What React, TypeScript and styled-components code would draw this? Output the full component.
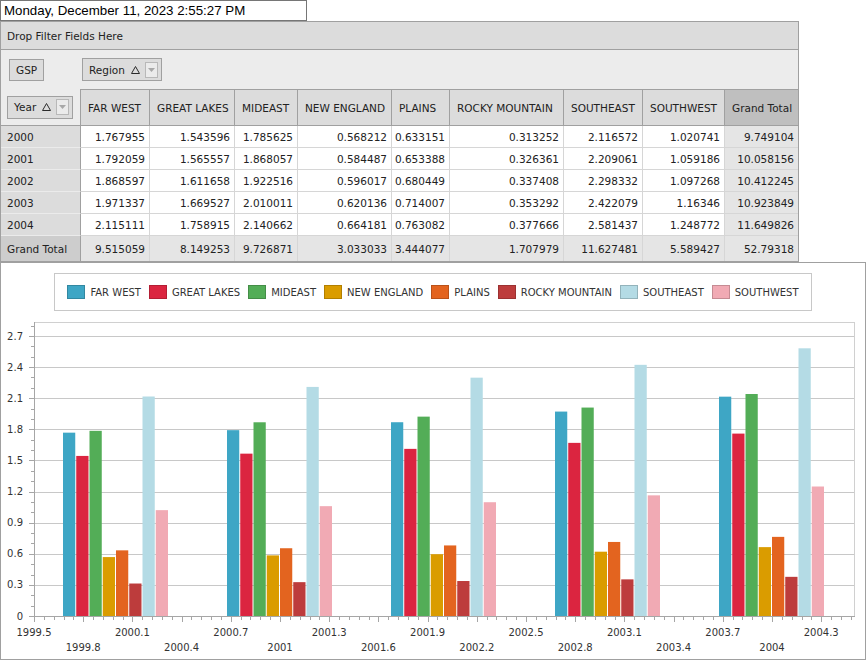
import React from 'react';
import styled, { createGlobalStyle } from 'styled-components';

const GlobalStyle = createGlobalStyle`
  html, body {
    margin: 0;
    padding: 0;
    background: #fff;
  }
  body {
    font-family: "DejaVu Sans", "Liberation Sans", sans-serif;
    color: #222;
  }
`;

type Region = { name: string; color: string; values: number[] };

const regions: Region[] = [
  { name: 'FAR WEST', color: '#3ea6c5', values: [1.767955, 1.792059, 1.868597, 1.971337, 2.115111] },
  { name: 'GREAT LAKES', color: '#db2540', values: [1.543596, 1.565557, 1.611658, 1.669527, 1.758915] },
  { name: 'MIDEAST', color: '#53ad57', values: [1.785625, 1.868057, 1.922516, 2.010011, 2.140662] },
  { name: 'NEW ENGLAND', color: '#da9c00', values: [0.568212, 0.584487, 0.596017, 0.620136, 0.664181] },
  { name: 'PLAINS', color: '#e3641f', values: [0.633151, 0.653388, 0.680449, 0.714007, 0.763082] },
  { name: 'ROCKY MOUNTAIN', color: '#bd3c3c', values: [0.313252, 0.326361, 0.337408, 0.353292, 0.377666] },
  { name: 'SOUTHEAST', color: '#b4dbe5', values: [2.116572, 2.209061, 2.298332, 2.422079, 2.581437] },
  { name: 'SOUTHWEST', color: '#f1aab4', values: [1.020741, 1.059186, 1.097268, 1.16346, 1.248772] },
];

const years = [2000, 2001, 2002, 2003, 2004];
const yearTotals = ['9.749104', '10.058156', '10.412245', '10.923849', '11.649826'];
const regionTotals = ['9.515059', '8.149253', '9.726871', '3.033033', '3.444077', '1.707979', '11.627481', '5.589427'];
const grandTotal = '52.79318';

/* ---------- page ---------- */

const Page = styled.div`
  width: 866px;
`;

const DateBox = styled.div`
  box-sizing: border-box;
  width: 307px;
  height: 21px;
  padding: 0 3px;
  border: 1px solid #767676;
  font-family: "Liberation Sans", Arial, sans-serif;
  font-size: 13.3px;
  line-height: 19px;
  color: #000;
  white-space: nowrap;
`;

/* ---------- pivot grid ---------- */

const Pivot = styled.div`
  box-sizing: border-box;
  width: 799px;
  border: 1px solid #a0a0a0;
  font-size: 10.5px;
`;

const FilterArea = styled.div`
  box-sizing: border-box;
  height: 28px;
  display: flex;
  align-items: center;
  padding-left: 6px;
  background: #dcdcdc;
  border-bottom: 1px solid #a0a0a0;
`;

const FieldArea = styled.div`
  height: 39px;
  display: flex;
  align-items: center;
  background: #ececec;
`;

const DataFieldZone = styled.div`
  box-sizing: border-box;
  width: 81px;
  padding-left: 8px;
  display: flex;
`;

const FieldButton = styled.div<{ $menu?: boolean }>`
  box-sizing: border-box;
  display: inline-flex;
  align-items: center;
  height: ${({ $menu }) => ($menu ? '23px' : '22px')};
  padding: ${({ $menu }) => ($menu ? '0 3px 0 6px' : '0 6px')};
  gap: 5px;
  background: #dcdcdc;
  border: 1px solid #a0a0a0;
  white-space: nowrap;
`;

const FieldName = styled.span`
  margin-right: 1px;
`;

const DropBox = styled.span`
  box-sizing: border-box;
  width: 13px;
  height: 16px;
  display: flex;
  align-items: center;
  justify-content: center;
  background: #ebebeb;
  border: 1px solid #b8b8b8;
`;

const SortArrow = () => (
  <svg width="9" height="8" viewBox="0 0 9 8">
    <polygon points="0.5,7.5 4.5,0.5 8.5,7.5" fill="none" stroke="#2a2a2a" strokeWidth="1" />
  </svg>
);

const DropArrow = () => (
  <svg width="7" height="4" viewBox="0 0 7 4">
    <polygon points="0,0 7,0 3.5,4" fill="#a8a8a8" />
  </svg>
);

const MenuField = ({ name }: { name: string }) => (
  <FieldButton $menu>
    <FieldName>{name}</FieldName>
    <SortArrow />
    <DropBox>
      <DropArrow />
    </DropBox>
  </FieldButton>
);

const PivotGrid = styled.div`
  display: grid;
  grid-template-columns: 80px 69px 85px 63px 94px 58px 114px 79px 82px 73px;
  grid-template-rows: 37px repeat(5, 22px) 25px;
`;

const Cell = styled.div`
  box-sizing: border-box;
  display: flex;
  align-items: center;
  white-space: nowrap;
  overflow: hidden;
`;

const CornerCell = styled(Cell)`
  padding-left: 6px;
  background: #ececec;
  border-right: 1px solid #a0a0a0;
  border-bottom: 1px solid #a0a0a0;
`;

const ColHeader = styled(Cell)<{ $total?: boolean }>`
  padding-left: 7px;
  background: ${({ $total }) => ($total ? '#bfbfbf' : '#dcdcdc')};
  border-top: 1px solid #a0a0a0;
  border-bottom: 1px solid #a0a0a0;
  border-right: ${({ $total }) => ($total ? 'none' : '1px solid #a0a0a0')};
`;

const RowHeader = styled(Cell)<{ $total?: boolean }>`
  padding-left: 6px;
  background: ${({ $total }) => ($total ? '#cdcdcd' : '#dcdcdc')};
  border-right: 1px solid #a0a0a0;
  border-bottom: ${({ $total }) => ($total ? 'none' : '1px solid #ebebeb')};
`;

const ValueCell = styled(Cell)<{ $total?: boolean; $lastCol?: boolean; $lastRow?: boolean }>`
  justify-content: flex-end;
  padding-right: 4px;
  background: ${({ $total }) => ($total ? '#e5e5e5' : '#fff')};
  border-right: ${({ $lastCol }) => ($lastCol ? 'none' : '1px solid #d6d6d6')};
  border-bottom: ${({ $lastRow }) => ($lastRow ? 'none' : '1px solid #d6d6d6')};
`;

const PivotTable = () => (
  <Pivot>
    <FilterArea>Drop Filter Fields Here</FilterArea>
    <FieldArea>
      <DataFieldZone>
        <FieldButton>GSP</FieldButton>
      </DataFieldZone>
      <MenuField name="Region" />
    </FieldArea>
    <PivotGrid>
      <CornerCell>
        <MenuField name="Year" />
      </CornerCell>
      {regions.map((r) => (
        <ColHeader key={r.name}>{r.name}</ColHeader>
      ))}
      <ColHeader $total>Grand Total</ColHeader>

      {years.map((year, j) => (
        <React.Fragment key={year}>
          <RowHeader>{year}</RowHeader>
          {regions.map((r) => (
            <ValueCell key={r.name}>{String(r.values[j])}</ValueCell>
          ))}
          <ValueCell $total $lastCol>
            {yearTotals[j]}
          </ValueCell>
        </React.Fragment>
      ))}

      <RowHeader $total>Grand Total</RowHeader>
      {regionTotals.map((t, i) => (
        <ValueCell key={i} $total $lastRow>
          {t}
        </ValueCell>
      ))}
      <ValueCell $total $lastRow $lastCol>
        {grandTotal}
      </ValueCell>
    </PivotGrid>
  </Pivot>
);

/* ---------- chart ---------- */

const ChartPanel = styled.div`
  box-sizing: border-box;
  width: 866px;
  height: 398px;
  display: flex;
  flex-direction: column;
  align-items: center;
  border: 1px solid #a0a0a0;
`;

const Legend = styled.div`
  box-sizing: border-box;
  margin-top: 10px;
  height: 38px;
  display: flex;
  align-items: center;
  gap: 8px;
  padding: 0 12px;
  border: 1px solid #c8c8c8;
  font-size: 10px;
  color: #333;
`;

const LegendItem = styled.div`
  display: flex;
  align-items: center;
  gap: 5px;
  white-space: nowrap;
`;

const Swatch = styled.span<{ $color: string }>`
  box-sizing: border-box;
  width: 18px;
  height: 14px;
  background: ${({ $color }) => $color};
  border: 1px solid rgba(0, 0, 0, 0.18);
`;

const Plot = styled.svg`
  display: block;
  flex: none;
  text {
    font-family: "DejaVu Sans", sans-serif;
    font-size: 10px;
    fill: #333;
  }
`;

const X0 = 34;
const X_SCALE = 164;
const Y0 = 616;
const Y_SCALE = 103.7;
const xOf = (v: number) => X0 + (v - 1999.5) * X_SCALE;
const yOf = (v: number) => Y0 - v * Y_SCALE;
const crisp = (n: number) => Math.round(n) + 0.5;
const fmt = (v: number) => String(parseFloat(v.toFixed(1)));

const SLOT = 13.25;

const BarChart = () => {
  const gridLines = Array.from({ length: 9 }, (_, k) => 0.3 * (k + 1));
  const yTicks = Array.from({ length: 29 }, (_, k) => k);
  const xTicks = Array.from({ length: 84 }, (_, k) => k);
  const xLabels = Array.from({ length: 17 }, (_, k) => k);

  return (
    <Plot width={864} height={348} viewBox="1 311 864 348">
      <rect x={34.5} y={322.5} width={820} height={294} fill="#fff" stroke="#d0d0d0" />
      {gridLines.map((v) => (
        <line key={v} x1={35} x2={854} y1={crisp(yOf(v))} y2={crisp(yOf(v))} stroke="#c8c8c8" />
      ))}

      {years.map((year, j) => {
        const start = xOf(year) - (SLOT * regions.length) / 2;
        return regions.map((r, i) => {
          const top = yOf(r.values[j]);
          return (
            <rect
              key={`${year}-${r.name}`}
              x={start + i * SLOT}
              y={top}
              width={SLOT - 1}
              height={Y0 - top}
              fill={r.color}
            />
          );
        });
      })}

      <line x1={34.5} x2={34.5} y1={322} y2={617} stroke="#a6a6a6" />
      <line x1={34} x2={855} y1={616.5} y2={616.5} stroke="#a6a6a6" />

      {yTicks.map((k) => {
        const y = crisp(yOf(k * 0.1));
        const len = k % 3 === 0 ? 5 : 3;
        return <line key={k} x1={34 - len} x2={34} y1={y} y2={y} stroke="#a6a6a6" />;
      })}
      {gridLines.concat([0]).map((v) => (
        <text key={v} x={23} y={yOf(v) + 3.6} textAnchor="end">
          {v === 0 ? '0' : fmt(v)}
        </text>
      ))}

      {xTicks.map((k) => {
        const x = crisp(xOf(1999.5 + k * 0.06));
        const len = k % 5 === 0 ? 5 : 3;
        return <line key={k} x1={x} x2={x} y1={617} y2={617 + len} stroke="#a6a6a6" />;
      })}
      {xLabels.map((k) => {
        const v = 1999.5 + k * 0.3;
        return (
          <text key={k} x={xOf(v)} y={k % 2 === 0 ? 636 : 651} textAnchor="middle">
            {fmt(v)}
          </text>
        );
      })}
    </Plot>
  );
};

const Chart = () => (
  <ChartPanel>
    <Legend>
      {regions.map((r) => (
        <LegendItem key={r.name}>
          <Swatch $color={r.color} />
          {r.name}
        </LegendItem>
      ))}
    </Legend>
    <BarChart />
  </ChartPanel>
);

export default function App() {
  return (
    <Page>
      <GlobalStyle />
      <DateBox>Monday, December 11, 2023 2:55:27 PM</DateBox>
      <PivotTable />
      <Chart />
    </Page>
  );
}
